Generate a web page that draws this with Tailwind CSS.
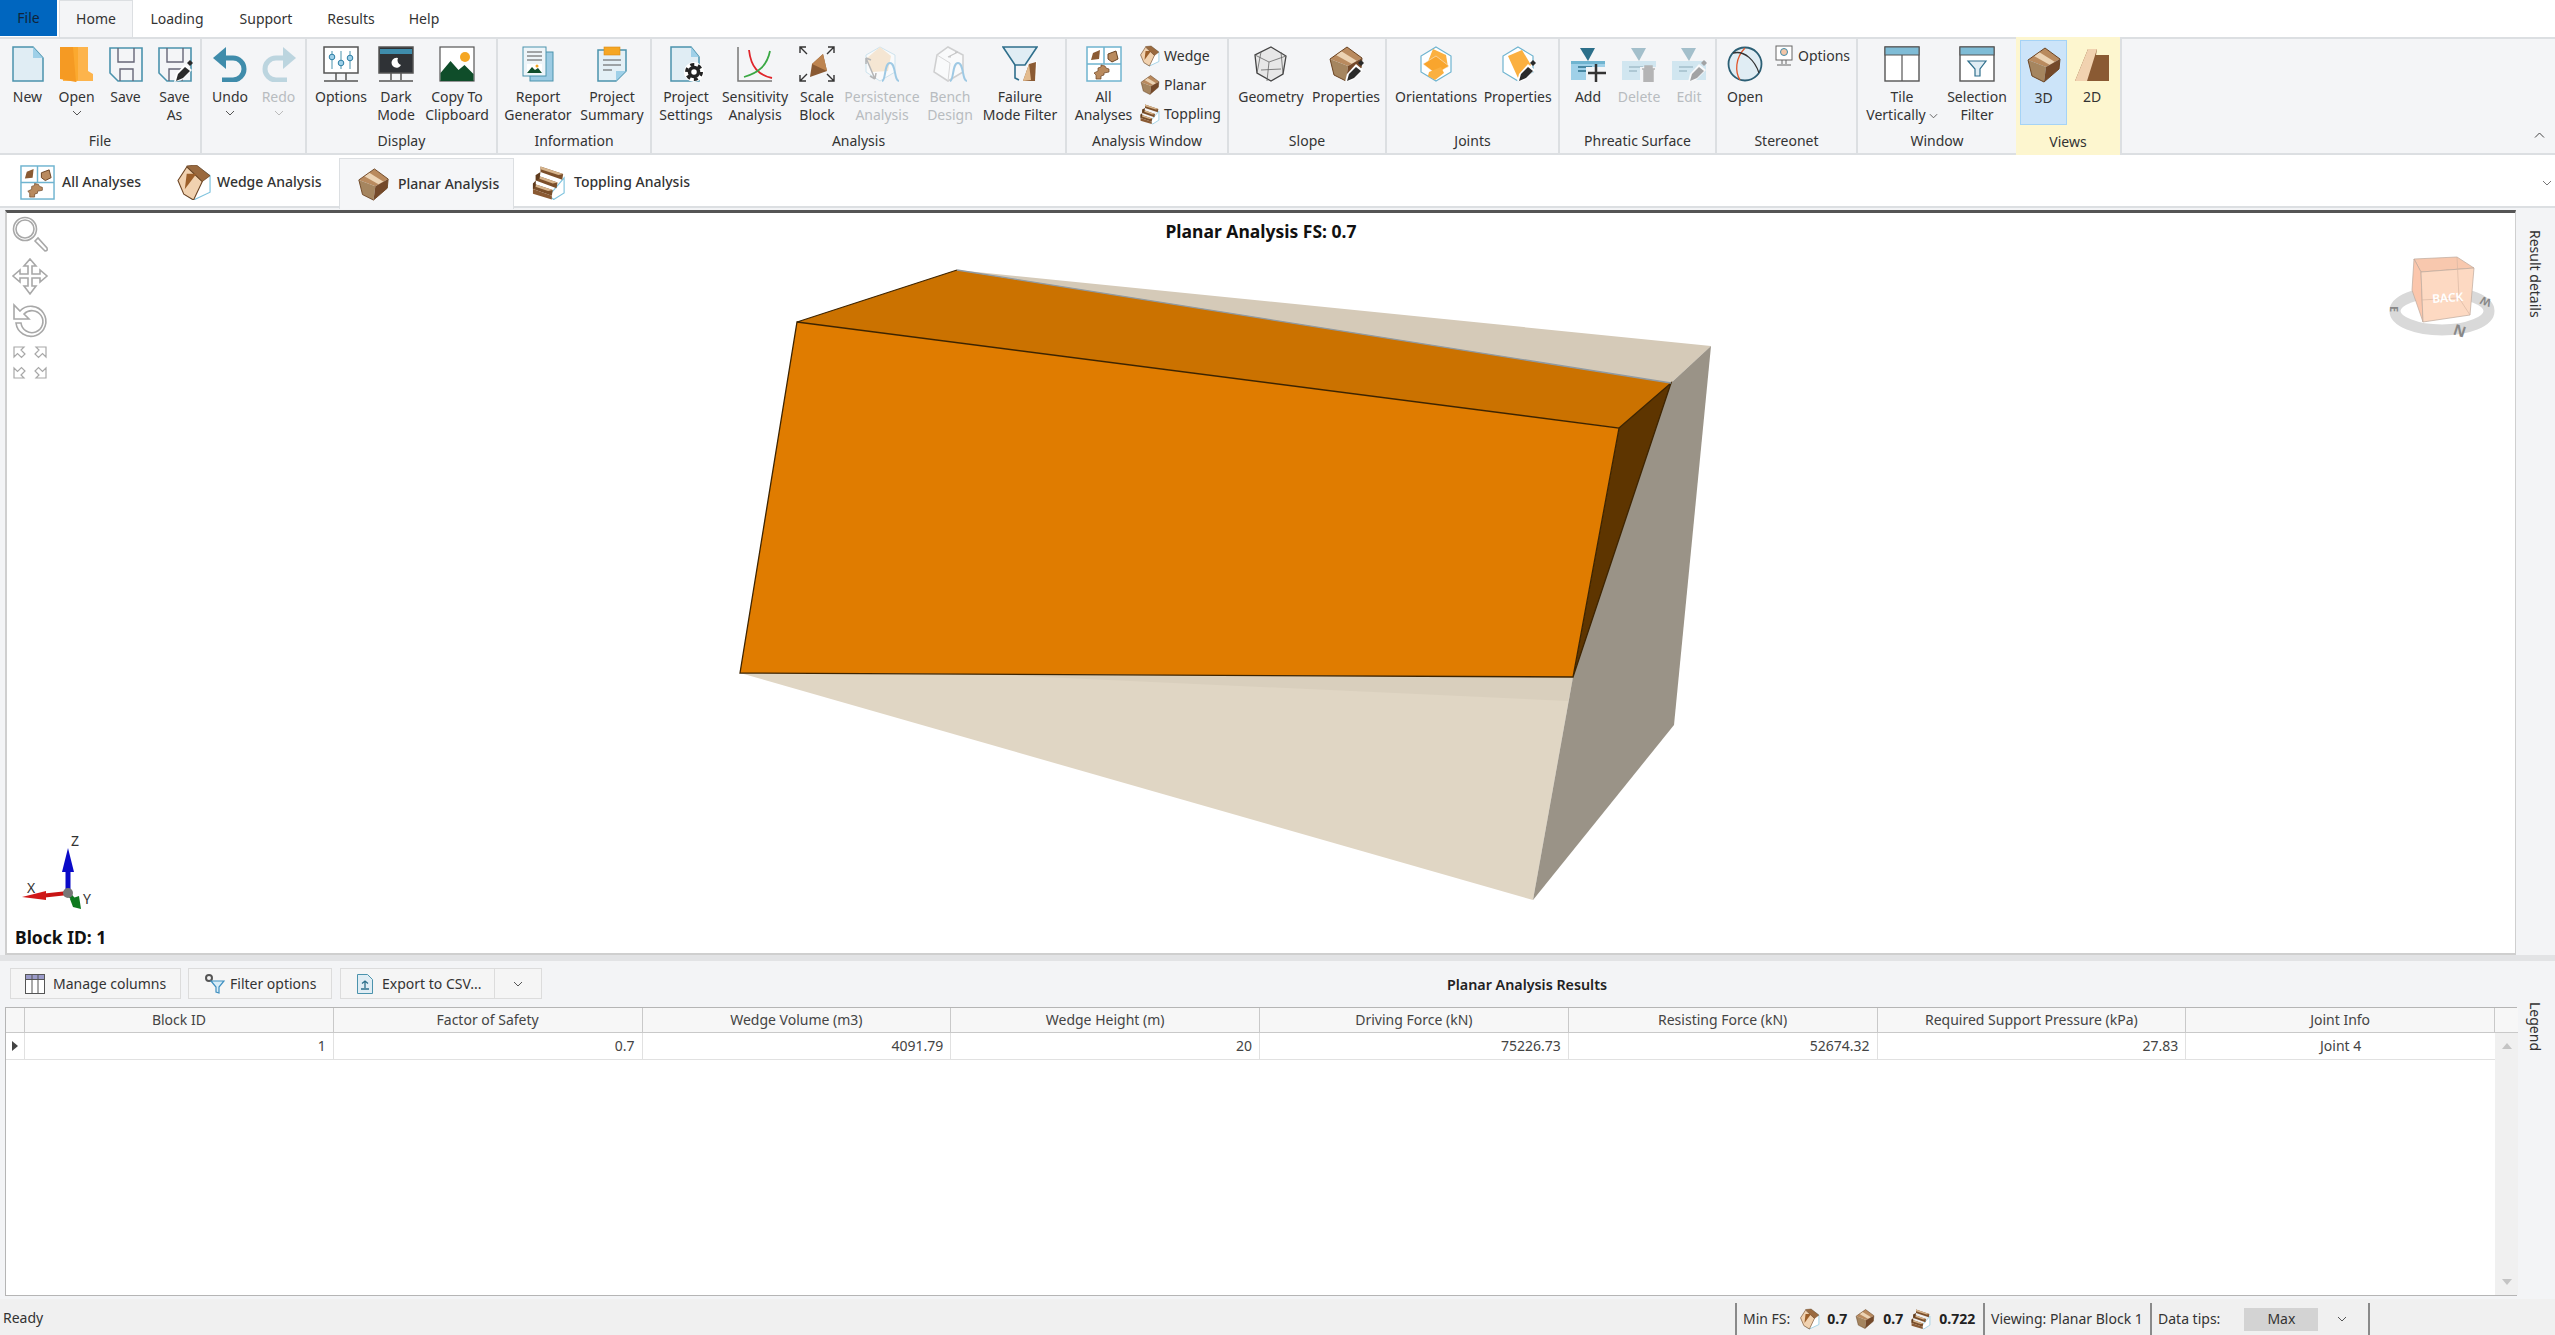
<!DOCTYPE html>
<html lang="en">
<head>
<meta charset="UTF-8">
<title>Planar Analysis</title>
<script src="https://cdn.jsdelivr.net/npm/@tailwindcss/browser@4"></script>
</head>
<body class="bg-white">
<!-- shared icons -->
<svg class="hidden">
  <defs>
    <symbol id="i-new" viewBox="0 0 36 36"><path d="M3 1h20l10 11v23H3z" fill="#e0edf4" stroke="#4b93ad" stroke-width="1.5"/><path d="M23 1v11h10z" fill="#9fd0e8"/></symbol>
    <symbol id="i-open" viewBox="0 0 36 36"><path d="M4 1h25v24l5 3v7H4z" fill="#fdb44c"/><path d="M1 1h13l3 3v32L1 33z" fill="#f59a23"/><path d="M14 1h5v33l-2 2z" fill="#fba92f"/></symbol>
    <symbol id="i-save" viewBox="0 0 36 36"><path d="M2 2h32v33H10l-8-8z" fill="#f4f5f7" stroke="#4b93ad" stroke-width="1.6"/><path d="M10 2v14h16V2M12 35V23h13v12" fill="none" stroke="#667" stroke-width="1.4"/></symbol>
    <symbol id="i-pencil" viewBox="0 0 36 36"><path d="M17 36l2-8 9-10 7 6-10 10z" fill="#fff"/><path d="M19 35l2-7 7-7 5 4-7 7z" fill="#2a2a2a"/><path d="M30 17l3-3 3 3-3 3z" fill="#2a2a2a"/></symbol>
    <symbol id="i-undo" viewBox="0 0 36 36"><path d="M11 12h10a11 11 0 0 1 0 22H10" fill="none" stroke="#3f8cab" stroke-width="5"/><path d="M1 12L14 1v22z" fill="#3f8cab"/></symbol>
    <symbol id="i-planar" viewBox="0 0 36 36"><path d="M2 13L19 1l15 11-14 8z" fill="#b98a5e"/><path d="M8 9l5-4 16 10-5 3z" fill="#ecd3b4"/><path d="M2 13l18 7-2 15-12-6z" fill="#a5855f"/><path d="M20 20l14-8-1 10-15 13z" fill="#74492a"/><path d="M2 13L19 1l15 11-1 10-15 13-12-6z" fill="none" stroke="#6b4423" stroke-width="1"/></symbol>
    <symbol id="i-wedge" viewBox="0 0 36 36"><path d="M20 1l14 10v17l-17 8-9-6z" fill="#fff" stroke="#7fc3de" stroke-width="1.200"/><path d="M10 2L1 16l6 14 10 6 9-19z" fill="#f1d2b0" stroke="#6b4423" stroke-width="1.100"/><path d="M10 1l10-1 14 11-8 6z" fill="#9a6a3f" stroke="#6b4423" stroke-width=".8"/><path d="M10 9l10 0-12 16z" fill="#9c5f2a"/></symbol>
    <symbol id="i-topple" viewBox="0 0 36 36"><path d="M34 13v16l-11 7-5-4z" fill="#fff" stroke="#7fc3de" stroke-width="1.200"/><path d="M9 1l24 8-1 6-23-8z" fill="#7b4f2a"/><path d="M9 1l24 8-5 1L9 4z" fill="#d6b48c"/><path d="M4 10l23 8-1 6-22-8z" fill="#7b4f2a"/><path d="M4 10l23 8-5 1L5 13z" fill="#d6b48c"/><path d="M1 19l21 7-1 6L1 25z" fill="#7b4f2a"/><path d="M1 19l21 7-5 1L2 22z" fill="#d6b48c"/><path d="M9 7l-5 3v6l4-2zM4 16l-3 3v6l3-3z" fill="#5f3b1d"/><path d="M1 25l20 7v4L1 30z" fill="#8a5a33"/></symbol>
    <symbol id="i-all" viewBox="0 0 36 36"><rect x="1" y="1" width="34" height="34" fill="#fff" stroke="#6fb4d0" stroke-width="1.5"/><path d="M18 1v17M1 18h34" stroke="#6fb4d0" stroke-width="1.5"/><path d="M5 14l2-7 7-3-1 9z" fill="#8a5a33"/><path d="M22 8l8-3 2 8-6 3-4-3z" fill="#b98a5e" stroke="#6b4423"/><path d="M8 27l4-2v-3l3-1v-2l4 1 1 2 3 1v3l-5 1v2l-3 1v3h-5v-4z" fill="#b98a5e" stroke="#6b4423" stroke-width=".7"/></symbol>
    <symbol id="i-hexs" viewBox="0 0 36 36"><path d="M18 1l15 9v16l-15 9-15-9V10z" fill="#fff" stroke="#6fb4d0" stroke-width="1.2"/></symbol>
  </defs>
</svg>

<div class="w-[2555px] h-[1335px] overflow-hidden flex flex-col font-['Noto_Sans',sans-serif] text-[14px] leading-[18px] text-[#333]">

  <!-- menu tabs -->
  <div class="h-[37px] shrink-0 flex bg-white">
    <div class="w-[57px] h-[36px] bg-[#0066bf] flex items-center justify-center text-[#10243a]">File</div>
    <div class="ml-[2px] w-[74px] h-[37px] bg-[#f4f5f7] border border-b-0 border-[#dcdfe2] flex items-center justify-center">Home</div>
    <div class="w-[88px] flex items-center justify-center">Loading</div>
    <div class="w-[90px] flex items-center justify-center">Support</div>
    <div class="w-[80px] flex items-center justify-center">Results</div>
    <div class="w-[66px] flex items-center justify-center">Help</div>
  </div>

  <!-- ribbon -->
  <div class="h-[118px] shrink-0 flex relative bg-white">
    <div class="flex w-[2016px] bg-[#f4f5f7] border-y-2 border-[#dcdfe2]">

      <!-- File -->
      <section class="w-[202px] flex flex-col justify-between border-r-2 border-[#dcdfe2]">
        <div class="flex pl-[3px] pt-[7px]">
          <div class="w-[49px] flex flex-col items-center"><svg class="w-[36px] h-[36px]"><use href="#i-new"/></svg><span class="mt-[6px]">New</span></div>
          <div class="w-[49px] flex flex-col items-center"><svg class="w-[36px] h-[36px]"><use href="#i-open"/></svg><span class="mt-[6px]">Open</span><svg class="mt-[4px] w-[10px] h-[6px]" viewBox="0 0 10 6"><path d="M1 1l4 4 4-4" fill="none" stroke="#555"/></svg></div>
          <div class="w-[49px] flex flex-col items-center"><svg class="w-[36px] h-[36px]"><use href="#i-save"/></svg><span class="mt-[6px]">Save</span></div>
          <div class="w-[49px] flex flex-col items-center"><svg class="w-[36px] h-[36px]"><use href="#i-save"/><use href="#i-pencil"/></svg><span class="mt-[6px] text-center">Save<br>As</span></div>
        </div>
        <div class="h-[24px] flex items-center justify-center">File</div>
      </section>

      <!-- Undo / Redo -->
      <section class="w-[105px] flex flex-col justify-between border-r-2 border-[#dcdfe2]">
        <div class="flex pl-[4px] pt-[7px]">
          <div class="w-[48px] flex flex-col items-center"><svg class="w-[36px] h-[36px]"><use href="#i-undo"/></svg><span class="mt-[6px]">Undo</span><svg class="mt-[4px] w-[10px] h-[6px]" viewBox="0 0 10 6"><path d="M1 1l4 4 4-4" fill="none" stroke="#555"/></svg></div>
          <div class="w-[49px] flex flex-col items-center text-[#b8bcc0]"><svg class="w-[36px] h-[36px] opacity-30 -scale-x-100"><use href="#i-undo"/></svg><span class="mt-[6px]">Redo</span><svg class="mt-[4px] w-[10px] h-[6px]" viewBox="0 0 10 6"><path d="M1 1l4 4 4-4" fill="none" stroke="#bbb"/></svg></div>
        </div>
        <div class="h-[24px]"></div>
      </section>

      <!-- Display -->
      <section class="w-[191px] flex flex-col justify-between border-r-2 border-[#dcdfe2]">
        <div class="flex pl-[5px] pt-[7px]">
          <div class="w-[58px] flex flex-col items-center">
            <svg class="w-[36px] h-[36px]" viewBox="0 0 36 36"><rect x="1" y="1" width="34" height="26" fill="#fff" stroke="#555" stroke-width="1.5"/><path d="M13 27v7M23 27v7M1 35h34" stroke="#555" stroke-width="1.5"/><path d="M9 5v18M18 5v18M27 5v18" stroke="#4b93ad"/><circle cx="9" cy="11" r="2.8" fill="#9fd0e8" stroke="#2f7fa5"/><circle cx="18" cy="17" r="2.8" fill="#9fd0e8" stroke="#2f7fa5"/><circle cx="27" cy="12" r="2.8" fill="#9fd0e8" stroke="#2f7fa5"/></svg>
            <span class="mt-[6px]">Options</span></div>
          <div class="w-[52px] flex flex-col items-center">
            <svg class="w-[36px] h-[36px]" viewBox="0 0 36 36"><rect x="1" y="1" width="34" height="26" fill="#2f3236" stroke="#555" stroke-width="1.5"/><rect x="2" y="3" width="32" height="5" fill="#3f8cab"/><path d="M20 12a5 5 0 1 0 3 7 5 5 0 0 1-3-7z" fill="#fff"/><path d="M13 27v7M23 27v7M1 35h34" stroke="#555" stroke-width="1.5"/></svg>
            <span class="mt-[6px] text-center">Dark<br>Mode</span></div>
          <div class="w-[70px] flex flex-col items-center">
            <svg class="w-[36px] h-[36px]" viewBox="0 0 36 36"><rect x="1" y="1" width="34" height="34" fill="#fff" stroke="#555" stroke-width="1.2"/><circle cx="26" cy="11" r="5" fill="#f5a623"/><path d="M1.500 35v-8l10-12 8 9 6-5 9 9v7z" fill="#0f4d2a"/></svg>
            <span class="mt-[6px] text-center whitespace-nowrap">Copy To<br>Clipboard</span></div>
        </div>
        <div class="h-[24px] flex items-center justify-center">Display</div>
      </section>

      <!-- Information -->
      <section class="w-[154px] flex flex-col justify-between border-r-2 border-[#dcdfe2]">
        <div class="flex pl-[2px] pt-[7px]">
          <div class="w-[76px] flex flex-col items-center">
            <svg class="w-[36px] h-[36px]" viewBox="0 0 36 36"><rect x="10" y="6" width="23" height="29" fill="#9ccbe3" stroke="#4b93ad"/><rect x="3" y="1" width="23" height="29" fill="#eef5f9" stroke="#4b93ad"/><path d="M7 6h15M7 10h15M7 14h15" stroke="#555"/><rect x="7" y="18" width="15" height="9" fill="#fff"/><path d="M7 27l5-6 3 3 3-2 4 5z" fill="#0f4d2a"/><circle cx="17" cy="20" r="1.500" fill="#f5a623"/></svg>
            <span class="mt-[6px] text-center">Report<br>Generator</span></div>
          <div class="w-[72px] flex flex-col items-center">
            <svg class="w-[36px] h-[36px]" viewBox="0 0 36 36"><path d="M4 4h28v21L22 35H4z" fill="#e4f0f6" stroke="#4b93ad" stroke-width="1.500"/><path d="M22 35V25h10z" fill="#9fd0e8"/><rect x="10" y="1" width="16" height="8" fill="#f5a623" stroke="#d98a14" stroke-width=".6"/><path d="M9 14h18M9 19h18M9 24h9" stroke="#555"/></svg>
            <span class="mt-[6px] text-center">Project<br>Summary</span></div>
        </div>
        <div class="h-[24px] flex items-center justify-center">Information</div>
      </section>

      <!-- Analysis -->
      <section class="w-[415px] flex flex-col justify-between border-r-2 border-[#dcdfe2]">
        <div class="flex pl-[4px] pt-[7px]">
          <div class="w-[60px] flex flex-col items-center">
            <svg class="w-[36px] h-[36px]" viewBox="0 0 36 36"><path d="M3 1h20l8 10v24H3z" fill="#e0edf4" stroke="#4b93ad" stroke-width="1.500"/><path d="M23 1v10h8z" fill="#9fd0e8"/><circle cx="26" cy="26" r="10" fill="#fff"/><circle cx="26" cy="26" r="4.500" fill="none" stroke="#222" stroke-width="3.500"/><circle cx="26" cy="26" r="7.500" fill="none" stroke="#222" stroke-width="3" stroke-dasharray="4 3.850"/></svg>
            <span class="mt-[6px] text-center">Project<br>Settings</span></div>
          <div class="w-[78px] flex flex-col items-center">
            <svg class="w-[36px] h-[36px]" viewBox="0 0 36 36"><path d="M1 1v34h34" fill="none" stroke="#777" stroke-width="1.500"/><path d="M12 4c2 18 10 25 23 28" fill="none" stroke="#e0252b" stroke-width="1.800"/><path d="M33 5c-3 15-12 22-26 26" fill="none" stroke="#3aa844" stroke-width="1.800"/></svg>
            <span class="mt-[6px] text-center">Sensitivity<br>Analysis</span></div>
          <div class="w-[46px] flex flex-col items-center">
            <svg class="w-[36px] h-[36px]" viewBox="0 0 36 36"><path d="M24 8l4 17-17 6 2-13z" fill="#8a5a33"/><path d="M24 8l-11 10 15 7z" fill="#bd8450"/><path d="M1 1l7 7M1 7V1h6M35 1l-7 7M29 1h6v6M1 35l7-7M1 29v6h6M35 35l-7-7M35 29v6h-6" fill="none" stroke="#333" stroke-width="1.400"/></svg>
            <span class="mt-[6px] text-center">Scale<br>Block</span></div>
          <div class="w-[84px] flex flex-col items-center text-[#b8bcc0]">
            <svg class="w-[36px] h-[36px] opacity-50" viewBox="0 0 36 36"><path d="M16 1l15 8v17l-15 9L2 26V9z" fill="#fff" stroke="#a9d3e6"/><path d="M16 1l11 9-3 15-16 1L3 12z" fill="#f6d9b0"/><path d="M2 12l9 21M2 12l0 6M2 12l5 2M11 33l1-6M11 33l-5-3" fill="none" stroke="#777" stroke-width="1.500"/><path d="M18 35c4 0 2-18 8-18s4 18 9 18" fill="none" stroke="#4b9fd3" stroke-width="2"/></svg>
            <span class="mt-[6px] text-center">Persistence<br>Analysis</span></div>
          <div class="w-[52px] flex flex-col items-center text-[#b8bcc0]">
            <svg class="w-[36px] h-[36px] opacity-50" viewBox="0 0 36 36"><path d="M16 1l15 8v17l-15 9L2 26 5 9z" fill="#fff" stroke="#aaa" stroke-width="1.500"/><path d="M5 9l13 8-2 18" fill="none" stroke="#bbb"/><path d="M16 11l10-5M16 11l3 0M26 6l-3 0" stroke="#999" stroke-width="1.200"/><path d="M18 35c4 0 2-18 8-18s4 18 9 18" fill="none" stroke="#4b9fd3" stroke-width="2"/></svg>
            <span class="mt-[6px] text-center">Bench<br>Design</span></div>
          <div class="w-[88px] flex flex-col items-center">
            <svg class="w-[36px] h-[36px]" viewBox="0 0 36 36"><path d="M1 1h34L23 19H13z" fill="#e0edf4" stroke="#2f6f8c" stroke-width="1.600"/><path d="M13 19v13l4 2M13 1" fill="none" stroke="#2f6f8c" stroke-width="1.600"/><path d="M22 34l4-16 9-3-1 19z" fill="#fff"/><path d="M21 35l6-17 7-2-1 19z" fill="#8a5a33"/><path d="M21 35l6-17 2 16z" fill="#e3bb8e"/></svg>
            <span class="mt-[6px] text-center whitespace-nowrap">Failure<br>Mode Filter</span></div>
        </div>
        <div class="h-[24px] flex items-center justify-center">Analysis</div>
      </section>

      <!-- Analysis Window -->
      <section class="w-[162px] flex flex-col justify-between border-r-2 border-[#dcdfe2]">
        <div class="flex pt-[7px]">
          <div class="w-[73px] flex flex-col items-center"><svg class="w-[36px] h-[36px]"><use href="#i-all"/></svg><span class="mt-[6px] text-center">All<br>Analyses</span></div>
          <div class="flex flex-col -mt-[5px]">
            <div class="h-[29px] flex items-center gap-[4px]"><svg class="w-[20px] h-[22px]"><use href="#i-wedge"/></svg>Wedge</div>
            <div class="h-[29px] flex items-center gap-[4px]"><svg class="w-[20px] h-[22px]"><use href="#i-planar"/></svg>Planar</div>
            <div class="h-[29px] flex items-center gap-[4px]"><svg class="w-[20px] h-[22px]"><use href="#i-topple"/></svg>Toppling</div>
          </div>
        </div>
        <div class="h-[24px] flex items-center justify-center">Analysis Window</div>
      </section>

      <!-- Slope -->
      <section class="w-[158px] flex flex-col justify-between border-r-2 border-[#dcdfe2]">
        <div class="flex pl-[3px] pt-[7px]">
          <div class="w-[78px] flex flex-col items-center">
            <svg class="w-[36px] h-[36px]" viewBox="0 0 36 36"><path d="M18 1l15 9-3 18-12 7-14-8-2-18z" fill="#e7e7e7" stroke="#444" stroke-width="1.300"/><path d="M2 9l14 7 17-6M16 16l-2 19M8 24l20-1M8 6l-4 21M28 6l2 22" fill="none" stroke="#666" stroke-width=".8"/></svg>
            <span class="mt-[6px]">Geometry</span></div>
          <div class="w-[72px] flex flex-col items-center">
            <svg class="w-[36px] h-[36px]"><use href="#i-planar"/><use href="#i-pencil"/></svg>
            <span class="mt-[6px]">Properties</span></div>
        </div>
        <div class="h-[24px] flex items-center justify-center">Slope</div>
      </section>

      <!-- Joints -->
      <section class="w-[173px] flex flex-col justify-between border-r-2 border-[#dcdfe2]">
        <div class="flex pl-[8px] pt-[7px]">
          <div class="w-[83px] flex flex-col items-center">
            <svg class="w-[36px] h-[36px]" viewBox="0 0 36 36"><use href="#i-hexs"/><path d="M15 3l13 6 2 12-8 3-13-6z" fill="#fbb040"/><path d="M5 18l13-8 13 10-13 8z" fill="#f9a52d" stroke="#f4f5f7" stroke-width=".5"/><path d="M11 26l12-5 3 6-9 7-7-4z" fill="#fbb040"/></svg>
            <span class="mt-[6px]">Orientations</span></div>
          <div class="w-[83px] flex flex-col items-center">
            <svg class="w-[36px] h-[36px]"><use href="#i-hexs"/><path d="M8 10L22 4l9 15-13 13z" fill="#fbb040"/><use href="#i-pencil"/></svg>
            <span class="mt-[6px]">Properties</span></div>
        </div>
        <div class="h-[24px] flex items-center justify-center">Joints</div>
      </section>

      <!-- Phreatic Surface -->
      <section class="w-[157px] flex flex-col justify-between border-r-2 border-[#dcdfe2]">
        <div class="flex pl-[2px] pt-[7px]">
          <div class="w-[52px] flex flex-col items-center">
            <svg class="w-[36px] h-[36px]" viewBox="0 0 36 36"><path d="M10 2h15l-7 13z" fill="#2c6f8a"/><rect x="1" y="15" width="34" height="19" fill="#9fd0e8"/><rect x="1" y="15" width="34" height="3" fill="#6fb4d0"/><path d="M8 21h14M8 25h8" stroke="#2c6f8a" stroke-width="1.500"/><rect x="16" y="21" width="20" height="15" fill="#f4f5f7"/><path d="M26 18v18M18 27h18" stroke="#333" stroke-width="2.500"/></svg>
            <span class="mt-[6px]">Add</span></div>
          <div class="w-[50px] flex flex-col items-center text-[#b8bcc0]">
            <svg class="w-[36px] h-[36px] opacity-40" viewBox="0 0 36 36"><path d="M10 2h15l-7 13z" fill="#2c6f8a"/><rect x="1" y="15" width="34" height="19" fill="#9fd0e8"/><path d="M8 21h14M8 25h8" stroke="#2c6f8a" stroke-width="1.500"/><rect x="19" y="21" width="17" height="15" fill="#f4f5f7"/><path d="M21 23h13M24 23v-3h7v3M23 23v13h9V23" fill="#555" stroke="#555" stroke-width="1.500"/></svg>
            <span class="mt-[6px]">Delete</span></div>
          <div class="w-[50px] flex flex-col items-center text-[#b8bcc0]">
            <svg class="w-[36px] h-[36px] opacity-40" viewBox="0 0 36 36"><path d="M10 2h15l-7 13z" fill="#2c6f8a"/><rect x="1" y="15" width="34" height="19" fill="#9fd0e8"/><path d="M8 21h14M8 25h8" stroke="#2c6f8a" stroke-width="1.500"/><use href="#i-pencil"/></svg>
            <span class="mt-[6px]">Edit</span></div>
        </div>
        <div class="h-[24px] flex items-center justify-center">Phreatic Surface</div>
      </section>

      <!-- Stereonet -->
      <section class="w-[141px] flex flex-col justify-between border-r-2 border-[#dcdfe2]">
        <div class="flex pt-[7px]">
          <div class="w-[56px] flex flex-col items-center">
            <svg class="w-[36px] h-[36px]" viewBox="0 0 36 36"><circle cx="18" cy="18" r="16.500" fill="#e0edf4" stroke="#2c5f75" stroke-width="1.800"/><path d="M18 2C8 12 8 26 13 34" fill="none" stroke="#e0552b" stroke-width="1.300"/><path d="M6 7c12-3 22 8 26 20" fill="none" stroke="#333" stroke-width="1.300"/></svg>
            <span class="mt-[6px]">Open</span></div>
          <div class="h-[22px] flex items-center gap-[5px] -mt-[1px] ml-[2px]">
            <svg class="w-[18px] h-[22px]" viewBox="0 0 18 22"><rect x="1" y="1" width="16" height="14" fill="#fff" stroke="#666"/><circle cx="9" cy="7" r="3.500" fill="#f2c6a8" stroke="#3f8cab"/><path d="M7 15v4M11 15v4M2 20h14" stroke="#666"/></svg>Options</div>
        </div>
        <div class="h-[24px] flex items-center justify-center">Stereonet</div>
      </section>

      <!-- Window -->
      <section class="w-[158px] flex flex-col justify-between">
        <div class="flex pl-[6px] pt-[7px]">
          <div class="w-[76px] flex flex-col items-center">
            <svg class="w-[36px] h-[36px]" viewBox="0 0 36 36"><rect x="1" y="1" width="34" height="34" fill="#fff" stroke="#555" stroke-width="1.400"/><rect x="1" y="1" width="34" height="8" fill="#7fbcd6" stroke="#555" stroke-width="1"/><path d="M18 9v26" stroke="#555" stroke-width="1.200"/></svg>
            <span class="mt-[6px] text-center whitespace-nowrap">Tile<br>Vertically<svg class="inline ml-[3px] w-[9px] h-[6px]" viewBox="0 0 10 6"><path d="M1 1l4 4 4-4" fill="none" stroke="#555"/></svg></span></div>
          <div class="w-[74px] flex flex-col items-center">
            <svg class="w-[36px] h-[36px]" viewBox="0 0 36 36"><rect x="1" y="1" width="34" height="34" fill="#fff" stroke="#555" stroke-width="1.400"/><rect x="1" y="1" width="34" height="8" fill="#7fbcd6" stroke="#555" stroke-width="1"/><path d="M9 15h18l-6 8v7h-5v-7z" fill="#e0edf4" stroke="#2f6f8c" stroke-width="1.200"/></svg>
            <span class="mt-[6px] text-center">Selection<br>Filter</span></div>
        </div>
        <div class="h-[24px] flex items-center justify-center">Window</div>
      </section>
    </div>

    <!-- Views -->
    <section class="w-[104px] bg-[#fdf6cf] flex flex-col justify-between">
      <div class="flex pl-[4px] pt-[3px]">
        <div class="w-[47px] h-[85px] bg-[#cce4f9] border border-[#a5d3f6] flex flex-col items-center pt-[6px]"><svg class="w-[36px] h-[36px]"><use href="#i-planar"/></svg><span class="mt-[6px]">3D</span></div>
        <div class="w-[50px] flex flex-col items-center pt-[6px]">
          <svg class="w-[36px] h-[36px]" viewBox="0 0 36 36"><path d="M1 35L14 3h9l-1 6h13v26z" fill="#8a5a33"/><path d="M1 35L14 3h9L13 35z" fill="#f1d2b0"/></svg>
          <span class="mt-[6px]">2D</span></div>
      </div>
      <div class="h-[26px] flex items-center justify-center">Views</div>
    </section>

    <!-- empty end of the ribbon -->
    <div class="flex-1 relative bg-[#f4f5f7] border-y-2 border-l-2 border-[#dcdfe2]">
      <svg class="absolute right-[10px] bottom-[15px] w-[11px] h-[6px]" viewBox="0 0 11 6"><path d="M1 5.500l4.500-4.500 4.500 4.500" fill="none" stroke="#444"/></svg>
    </div>
  </div>

  <!-- document tabs -->
  <div class="h-[53px] shrink-0 flex relative bg-white font-medium border-b-2 border-[#dcdfe2]">
    <div class="w-[171px] pt-[3px] flex items-center pl-[20px] gap-[7px]"><svg class="w-[35px] h-[35px]"><use href="#i-all"/></svg>All Analyses</div>
    <div class="w-[168px] pt-[3px] flex items-center pl-[6px] gap-[5px]"><svg class="w-[35px] h-[35px]"><use href="#i-wedge"/></svg>Wedge Analysis</div>
    <div class="w-[175px] h-[51px] mt-[3px] flex items-center pl-[17px] gap-[8px] bg-[#f5f6f8] border border-b-0 border-[#dcdfe2]"><svg class="w-[33px] h-[35px]"><use href="#i-planar"/></svg>Planar Analysis</div>
    <div class="pt-[3px] flex items-center pl-[18px] gap-[8px]"><svg class="w-[34px] h-[35px]"><use href="#i-topple"/></svg>Toppling Analysis</div>
    <svg class="absolute right-[3px] top-[25px] w-[10px] h-[6px]" viewBox="0 0 10 6"><path d="M1 1l4 4 4-4" fill="none" stroke="#777"/></svg>
  </div>

  <!-- viewport and result details panel -->
  <div class="h-[747px] shrink-0 flex bg-[#f3f4f6]">
    <div class="relative ml-[5px] mt-[2px] w-[2511px] border-l-2 border-t-[3px] border-b-2 border-r border-l-[#cfcfcf] border-t-[#555] border-b-[#cfcfcf] border-r-[#cfcfcf] bg-white">
      <svg class="absolute inset-0 w-full h-full" viewBox="7 213 2508 740" font-family="Noto Sans, sans-serif">
        <!-- rock model -->
        <path d="M740 673L1573 677L1533 900Z" fill="#e0d6c4"/>
        <path d="M1000 675L1573 677L1568 701Z" fill="#d9cfbd"/>
        <path d="M957 270L1711 346L1671 383Z" fill="#d5cab8"/>
        <path d="M1711 346L1674 725L1533 900L1573 677L1671 383Z" fill="#9a9387"/>
        <path d="M797 322L957 270L1671 383L1619 428Z" fill="#cb7200"/>
        <path d="M1619 428L1671 383L1573 677Z" fill="#5e3500"/>
        <path d="M797 322L1619 428L1573 677L740 673Z" fill="#e07c00"/>
        <path d="M797 322L1619 428L1573 677L740 673ZM797 322L957 270M1619 428L1671 383L1573 677" fill="none" stroke="#3d2400" stroke-width="1.300"/>
        <path d="M957 270L1671 383" stroke="#8f9aa3" stroke-width="1.300"/>

        <!-- view cube -->
        <ellipse cx="2442" cy="311" rx="47" ry="19" fill="none" stroke="#d9d9d9" stroke-width="11"/>
        <text x="2458" y="336" font-size="15" font-weight="700" fill="#888" transform="rotate(18 2458 336)" text-anchor="middle">N</text>
        <text x="2487" y="298" font-size="11" font-weight="700" fill="#888" transform="rotate(200 2487 298)" text-anchor="middle">W</text>
        <text x="2390" y="309" font-size="11" font-weight="700" fill="#888" transform="rotate(90 2390 309)" text-anchor="middle">E</text>
        <path d="M2414 259L2457 257L2474 268L2421 272Z" fill="#f8c8ae" stroke="#bda99c" stroke-width=".7"/>
        <path d="M2414 259L2421 272L2423 322L2412 290Z" fill="#fbc6ac" stroke="#bda99c" stroke-width=".7"/>
        <path d="M2421 272L2474 268L2470 315L2423 322Z" fill="#fdd9c2" stroke="#bda99c" stroke-width=".7"/>
        <path d="M2457 257L2459 298L2470 315M2459 298L2421 300" fill="none" stroke="#d9b8a4" stroke-width=".7"/>
        <text x="2448" y="302" font-size="12" font-weight="600" fill="#fff" text-anchor="middle" transform="rotate(-4 2448 302)">BACK</text>

        <!-- axes -->
        <path d="M68 893V866" stroke="#0a0ac8" stroke-width="5"/><path d="M68 848l6 24H62z" fill="#0a0ac8"/>
        <path d="M68 893L40 896" stroke="#c81414" stroke-width="4"/><path d="M22 897l24-6v9z" fill="#d01818"/>
        <path d="M68 893L78 905" stroke="#0f7a1f" stroke-width="4"/><path d="M70 899l9-3 2 13-8-2z" fill="#0f7a1f"/>
        <circle cx="68" cy="893" r="5" fill="#777"/>
        <text x="75" y="846" font-size="14" fill="#333" text-anchor="middle">Z</text>
        <text x="31" y="893" font-size="14" fill="#333" text-anchor="middle">X</text>
        <text x="87" y="904" font-size="14" fill="#333" text-anchor="middle">Y</text>

        <!-- navigation tools -->
        <g fill="#fff" stroke="#a8a8a8" stroke-width="1.600">
          <path d="M35 241l3-3 9 10q1 3-2 3z"/><circle cx="25" cy="229" r="11.500"/><circle cx="25" cy="229" r="9" fill="none"/>
          <path d="M30 259l6 7h-4v8h8v-4l7 6-7 6v-4h-8v8h4l-6 8-6-8h4v-8h-8v4l-7-6 7-6v4h8v-8h-4z"/>
          <path d="M20 311a15 15 0 1 1-4 12h5a11 11 0 1 0 3-9l5 5H14v-14z"/>
          <g stroke-width="1.200">
            <path id="arrow-corner" d="M14 347h10l-3 3 4 4-3.500 3.500-4-4-3.500 3.500z"/>
            <path d="M46 347H36l3 3-4 4 3.500 3.500 4-4 3.500 3.500z"/>
            <path d="M14 378h10l-3-3 4-4-3.500-3.500-4 4-3.500-3.500z"/>
            <path d="M46 378H36l3-3-4-4 3.500-3.500 4 4 3.500-3.500z"/>
          </g>
        </g>
      </svg>
      <div class="absolute left-0 right-0 top-[7px] text-center text-[17.500px] leading-[22px] font-bold text-[#111]">Planar Analysis FS: 0.7</div>
      <div class="absolute left-[8px] bottom-[5px] text-[17.500px] leading-[22px] font-bold text-[#111]">Block ID: 1</div>
    </div>
    <div class="w-[37px] flex justify-center pt-[22px] bg-[#f3f4f6]"><span class="[writing-mode:vertical-rl] h-fit">Result details</span></div>
  </div>

  <!-- results panel -->
  <div class="flex-1 flex flex-col bg-[#f3f4f6] min-h-0">
    <div class="h-[6px] shrink-0 bg-[#e2e3e5]"></div>
    <div class="flex-1 flex min-h-0">
      <div class="w-[2517px] flex flex-col pl-[5px]">
        <div class="h-[46px] shrink-0 relative flex items-start pt-[7px] pl-[5px]">
          <div class="w-[171px] h-[31px] flex items-center pl-[14px] gap-[8px] border border-[#dcdcdc] bg-[#f5f5f5]">
            <svg class="w-[20px] h-[20px]" viewBox="0 0 20 20"><rect x=".5" y=".5" width="19" height="19" fill="#fff" stroke="#555"/><rect x=".5" y=".5" width="19" height="5" fill="#9a9ac8" stroke="#555"/><path d="M7 .5v19M13 .5v19" stroke="#555"/></svg>Manage columns</div>
          <div class="ml-[7px] w-[144px] h-[31px] flex items-center pl-[15px] gap-[5px] border border-[#dcdcdc] bg-[#f5f5f5]">
            <svg class="w-[21px] h-[21px]" viewBox="0 0 21 21"><circle cx="5" cy="5" r="3" fill="none" stroke="#555" stroke-width="2"/><path d="M7 8h13l-5 6v6l-3-1v-5z" fill="#d7ecf7" stroke="#3e8fc0" stroke-width="1.200"/></svg>Filter options</div>
          <div class="ml-[8px] w-[155px] h-[31px] flex items-center pl-[16px] gap-[9px] border border-[#dcdcdc] bg-[#f5f5f5]">
            <svg class="w-[16px] h-[20px]" viewBox="0 0 16 20"><path d="M.5.5h10l5 5v14H.5z" fill="#e0edf4" stroke="#4b93ad"/><path d="M8 7v7M5 9.500L8 7l3 2.500M4 15h8" fill="none" stroke="#2c6f8a" stroke-width="1.300"/></svg>Export to CSV...</div>
          <div class="w-[47px] h-[31px] flex items-center justify-center border border-l-0 border-[#dcdcdc] bg-[#f5f5f5]"><svg class="w-[10px] h-[6px]" viewBox="0 0 10 6"><path d="M1 1l4 4 4-4" fill="none" stroke="#555"/></svg></div>
          <div class="absolute top-[15px] left-[1422px] w-[200px] text-center text-[14.300px] font-semibold text-[#222] whitespace-nowrap">Planar Analysis Results</div>
        </div>

        <div class="flex-1 grid grid-cols-[19px_repeat(8,308.750px)_23px] grid-rows-[25px_27px_1fr] border border-[#b5b5b5] bg-white mb-[3px] text-[#444] min-h-0">
          <div class="bg-[#f7f7f7] border-r border-b border-[#c9c9c9]"></div>
          <div class="bg-[#f7f7f7] border-r border-b border-[#c9c9c9] flex items-center justify-center">Block ID</div>
          <div class="bg-[#f7f7f7] border-r border-b border-[#c9c9c9] flex items-center justify-center">Factor of Safety</div>
          <div class="bg-[#f7f7f7] border-r border-b border-[#c9c9c9] flex items-center justify-center">Wedge Volume (m3)</div>
          <div class="bg-[#f7f7f7] border-r border-b border-[#c9c9c9] flex items-center justify-center">Wedge Height (m)</div>
          <div class="bg-[#f7f7f7] border-r border-b border-[#c9c9c9] flex items-center justify-center">Driving Force (kN)</div>
          <div class="bg-[#f7f7f7] border-r border-b border-[#c9c9c9] flex items-center justify-center">Resisting Force (kN)</div>
          <div class="bg-[#f7f7f7] border-r border-b border-[#c9c9c9] flex items-center justify-center">Required Support Pressure (kPa)</div>
          <div class="bg-[#f7f7f7] border-r border-b border-[#c9c9c9] flex items-center justify-center">Joint Info</div>
          <div class="bg-[#f7f7f7] border-b border-[#c9c9c9]"></div>

          <div class="border-r border-b border-[#e1e1e1] flex items-center justify-center"><svg class="w-[6px] h-[10px]" viewBox="0 0 6 10"><path d="M0 0l6 5-6 5z" fill="#444"/></svg></div>
          <div class="border-r border-b border-[#e1e1e1] flex items-center justify-end pr-[7px]">1</div>
          <div class="border-r border-b border-[#e1e1e1] flex items-center justify-end pr-[7px]">0.7</div>
          <div class="border-r border-b border-[#e1e1e1] flex items-center justify-end pr-[7px]">4091.79</div>
          <div class="border-r border-b border-[#e1e1e1] flex items-center justify-end pr-[7px]">20</div>
          <div class="border-r border-b border-[#e1e1e1] flex items-center justify-end pr-[7px]">75226.73</div>
          <div class="border-r border-b border-[#e1e1e1] flex items-center justify-end pr-[7px]">52674.32</div>
          <div class="border-r border-b border-[#e1e1e1] flex items-center justify-end pr-[7px]">27.83</div>
          <div class="border-b border-[#e1e1e1] flex items-center justify-center">Joint 4</div>
          <div class="col-start-10 row-start-2 row-span-2 bg-[#f0f0f0] flex flex-col items-center justify-between py-[10px]">
            <svg class="w-[10px] h-[6px]" viewBox="0 0 10 6"><path d="M0 6l5-6 5 6z" fill="#c4c4c4"/></svg>
            <svg class="w-[10px] h-[6px]" viewBox="0 0 10 6"><path d="M0 0l5 6 5-6z" fill="#c4c4c4"/></svg>
          </div>
        </div>
      </div>
      <div class="w-[36px] flex justify-center pt-[41px]"><span class="[writing-mode:vertical-rl] h-fit">Legend</span></div>
    </div>

    <!-- status bar -->
    <div class="h-[36px] shrink-0 flex bg-[#f0f0f0]">
      <div class="w-[1735px] flex items-center pl-[3px] pt-[2px]">Ready</div>
      <div class="w-[248px] mt-[4px] flex items-center pl-[6px] border-l-2 border-[#8a8a8a] whitespace-nowrap">
        Min FS:
        <svg class="ml-[10px] w-[20px] h-[22px]"><use href="#i-wedge"/></svg><b class="ml-[7px] text-[#222]">0.7</b>
        <svg class="ml-[8px] w-[20px] h-[22px]"><use href="#i-planar"/></svg><b class="ml-[8px] text-[#222]">0.7</b>
        <svg class="ml-[8px] w-[20px] h-[22px]"><use href="#i-topple"/></svg><b class="ml-[8px] text-[#222]">0.722</b>
      </div>
      <div class="w-[167px] mt-[4px] flex items-center pl-[6px] border-l-2 border-[#8a8a8a] whitespace-nowrap">Viewing: Planar Block 1</div>
      <div class="w-[220px] mt-[4px] flex items-center pl-[6px] border-x-2 border-[#8a8a8a]">
        Data tips:
        <div class="ml-[24px] w-[74px] h-[23px] bg-[#d3d3d3] flex items-center justify-center">Max</div>
        <svg class="ml-[19px] w-[10px] h-[6px]" viewBox="0 0 10 6"><path d="M1 1l4 4 4-4" fill="none" stroke="#555"/></svg>
      </div>
    </div>
  </div>
</div>
</body>
</html>
